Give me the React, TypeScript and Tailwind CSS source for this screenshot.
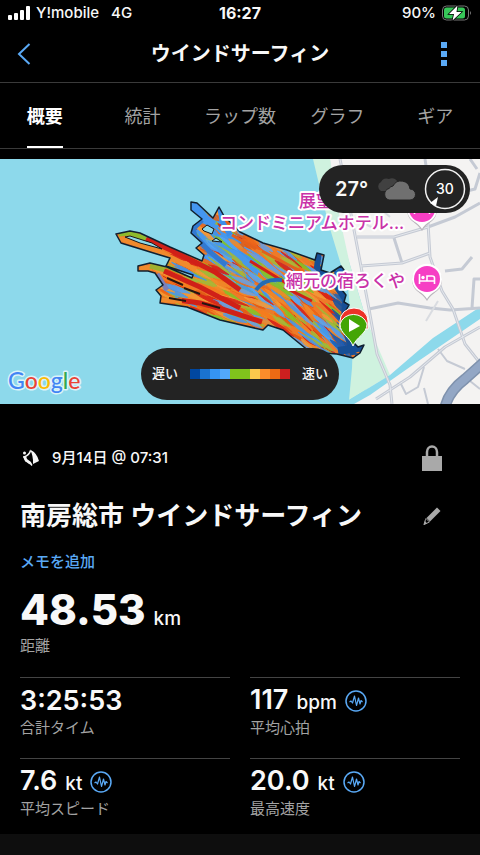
import type { ReactNode } from 'react';
import { useState } from 'react';

const tabs = ['概要', '統計', 'ラップ数', 'グラフ', 'ギア'];

const speedColors = [
  'bg-[#0047a0]',
  'bg-[#1a73d0]',
  'bg-[#3594f3]',
  'bg-[#52a8fa]',
  'bg-[#80c41c]',
  'bg-[#80c41c]',
  'bg-[#fcc84c]',
  'bg-[#fb8c2b]',
  'bg-[#ec6a14]',
  'bg-[#cc1f1f]',
];

const stats = [
  { value: '3:25:53', unit: '', label: '合計タイム', chart: false },
  { value: '117', unit: 'bpm', label: '平均心拍', chart: true },
  { value: '7.6', unit: 'kt', label: '平均スピード', chart: true },
  { value: '20.0', unit: 'kt', label: '最高速度', chart: true },
];

const trackOutline =
  'M116 75L130 72L140 74L170 88L202 102L204 96L196 89L202 84L191 74L193 67L202 60L191 51L191 43L197 44L213 59L219 48L224 57L240 73L263 84L287 91L315 101L317 94L324 96L321 111L330 114L341 107L344 111L338 122L342 131L346 136L344 143L349 146L345 153L350 160L352 182L358 188L364 186L360 194L353 199L337 195L310 193L283 171L268 166L263 171L220 161L187 148L160 144L161 137L156 131L163 126L155 114L148 112L138 112L138 107L150 104L167 108L192 119L193 116L166 107L170 99L160 96L121 84Z';

// Small seeded generator so the track looks the same on every render
function createRandom(seed: number) {
  let s = seed;
  return () => {
    s = (s * 16807) % 2147483647;
    return s / 2147483647;
  };
}

function buildStreaks() {
  const rand = createRandom(4853);
  const blue = ['#3f94ee', '#4fa0f5', '#4a98ea', '#5aa5f0', '#6a9fe0'];
  const warm = ['#f08a2c', '#f57d1f', '#d8241a', '#e2601c', '#ee6a1c', '#f29a3a'];
  const green = ['#86c22a', '#a3b83a'];
  const deep = ['#1d62b8', '#1a55a0'];
  const streaks: { d: string; color: string }[] = [];
  for (let i = 0; i < 900; i++) {
    const x = 135 + rand() * 222;
    const y = 45 + rand() * 150;
    const fromAxis = y - (60 + (x - 190) * 0.75);
    const nearStart = x > 205 && x < 255 && Math.abs(fromAxis - 8) < 20;
    const blueShare = nearStart ? 0.62 : x > 260 ? 0.34 : x < 200 ? 0.08 : 0.2;
    const r = rand();
    let set = warm;
    if (x > 328 && rand() < 0.6) set = deep;
    else if (r < blueShare) set = blue;
    else if (r > 0.83) set = green;
    const steep = x > 260 && y > 130 ? 10 : 0;
    const angle = ((fromAxis > 25 ? 18 : 27) + steep + rand() * 12) * (Math.PI / 180);
    const len = 12 + rand() * 24;
    const dx = Math.cos(angle) * len;
    const dy = Math.sin(angle) * len;
    // lens shape, pointed at both ends
    const w = 2 + rand() * 2.5;
    const nx = -Math.sin(angle) * w;
    const ny = Math.cos(angle) * w;
    const d = `M${x.toFixed(1)} ${y.toFixed(1)}q${(dx / 2 + nx).toFixed(1)} ${(dy / 2 + ny).toFixed(1)} ${dx.toFixed(1)} ${dy.toFixed(1)}q${(-dx / 2 - nx).toFixed(1)} ${(-dy / 2 - ny).toFixed(1)} ${(-dx).toFixed(1)} ${(-dy).toFixed(1)}`;
    streaks.push({ d, color: set[Math.floor(rand() * set.length)] });
  }
  return streaks;
}

const streaks = buildStreaks();

function HotelPin({ x, y }: { x: number; y: number }) {
  return (
    <g transform={`translate(${x} ${y})`}>
      <path d="M0 21C-3 16-6 14-10 11A15 15 0 1 1 10 11C6 14 3 16 0 21Z" fill="#b9b5bb" transform="translate(0 1)" />
      <path d="M0 20C-3 15-6 14-10 11A15 15 0 1 1 10 11C6 14 3 15 0 20Z" fill="#fff" />
      <circle r="13" fill="#f63fc4" />
      <path d="M-7.5-5V5M-7.500 2H7.500M7.500 5V-1Q7.500-3 5-3H0V2" fill="none" stroke="#fff" strokeWidth="1.600" />
      <circle cx="-4" cy="-1.500" r="1.700" fill="#fff" />
    </g>
  );
}

function TrackMap() {
  return (
    <svg viewBox="0 0 480 245" className="block w-full" role="img" aria-label="Google マップ">
      <defs>
        <clipPath id="track">
          <path d={trackOutline} />
        </clipPath>
      </defs>
      <rect width="480" height="245" fill="#8dd9eb" />
      <path d="M330 0L333 50L350 106L367 163L387 213L349 245H480V0Z" fill="#f4f3f2" />
      <path d="M313 0L328 63L348 129L353 180L352 209L349 241L390 216L367 163L350 106L340 60L330 0Z" fill="#cff2df" />
      <path d="M349 241L390 216L433 179L480 148V160L417 203L370 236L354 245H345Z" fill="#8dd9eb" />

      {/* roads */}
      <g fill="none" stroke="#c5cad4" strokeWidth="3" strokeLinejoin="round">
        <path d="M340 0L350 50L359 97L369 150L377 195L390 226L392 245" />
        <path d="M357 78L394 78L428 68M361 107L402 104L430 94" />
        <path d="M394 79L402 104M428 64L430 98L442 132L453 150L465 185L480 204" />
        <path d="M369 150L398 144L430 149L450 151L480 149M472 149L474 120H480" />
        <path d="M428 68L455 58L480 44M445 112L462 110L472 98" />
        <path d="M425 0L428 20M470 0L477 10M455 35L475 30L480 14" />
        <path d="M376 240L410 218L445 188L480 168" />
        <path d="M400 223L406 235L418 228L424 208M438 190L447 202L465 210M470 222L480 230M424 229L428 245" strokeWidth="2" />
        <path d="M438 142L426 162M352 58L375 70M375 45L390 58" stroke="#d9dce1" strokeWidth="2" />
      </g>
      <g fill="none" stroke="#e5e8ed" strokeWidth="1">
        <path d="M340 0L350 50L359 97L369 150L377 195L390 226L392 245" />
        <path d="M357 78L394 78L428 68M361 107L402 104L430 94M428 64L430 98L442 132L453 150L465 185L480 204" />
        <path d="M376 240L410 218L445 188L480 168" />
      </g>
      <path d="M445 248Q449 232 465 220L484 203" fill="none" stroke="#7f92ad" strokeWidth="11" />
      <path d="M445 248Q449 232 465 220L484 203" fill="none" stroke="#93a7c5" strokeWidth="8" />

      {/* recorded track, coloured by speed */}
      <g clipPath="url(#track)">
        <path d={trackOutline} fill="#ee7d2a" />
        <path d="M190 40L215 55L262 105L250 135L225 120L190 90Z" fill="#4a98ea" />
        {streaks.map((streak, i) => (
          <path key={i} d={streak.d} fill={streak.color} stroke={streak.color} strokeWidth="1" opacity="0.9" />
        ))}
        <g fill="none" strokeWidth="5">
          <path d="M119 79L160 93L196 111" stroke="#f08a2c" />
          <path d="M119 75L130 74L146 80" stroke="#8fbb2c" />
          <path d="M146 80L175 93L215 113L240 131" stroke="#d02018" />
          <path d="M140 109L152 109" stroke="#f08a2c" />
          <path d="M150 107L166 111" stroke="#a0b030" />
          <path d="M164 112L200 128L240 149" stroke="#d02018" />
          <path d="M157 115L167 131" stroke="#7c7fb8" />
          <path d="M178 141L200 144L225 151L262 163" stroke="#d02018" />
          <path d="M160 141L182 142" stroke="#f08a2c" />
          <path d="M262 92L300 112M232 76L256 90" stroke="#e2601c" strokeWidth="3" />
          <path d="M250 102L286 124M284 128L312 142" stroke="#d02018" strokeWidth="3" />
          <path d="M193 45L206 60L214 66" stroke="#4496f0" strokeWidth="8" />
          <path d="M202 61L193 70L195 77L209 92L226 106" stroke="#3279d0" />
          <path d="M220 50L222 62L230 76" stroke="#3d8de8" />
          <path d="M319 92L317 108L334 124L345 140L344 165L353 196" stroke="#174f96" strokeWidth="6" />
          <path d="M342 109L330 123" stroke="#1d62b8" />
          <path d="M338 192L352 190L362 188" stroke="#174f96" strokeWidth="8" />
        </g>
      </g>
      <path d={trackOutline} fill="none" stroke="#102030" strokeWidth="1.500" strokeLinejoin="round" />
      <path d="M125 78L130 77L152 84L162 90L140 84Z" fill="#8dd9eb" stroke="#181818" />
      <path d="M202 70L207 66L214 70L212 75L204 72Z" fill="#8dd9eb" stroke="#181818" />
      <path d="M212 82L222 83L216 79Z" fill="#8dd9eb" stroke="#181818" />
      <path d="M169 139L186 142M184 129L200 135M167 119L183 126M202 144L220 149" stroke="#241512" strokeWidth="2" />
      <path d="M256 131Q264 119 282 121" fill="none" stroke="#246bb4" strokeWidth="4" />

      <path d="M340 162A14 13 0 0 1 368 162V170H340Z" fill="#ed3127" stroke="#fff" strokeWidth="1" />
      <path d="M353 187C350 178 340 175 340 165A14 13 0 0 1 367 165C367 175 356 178 353 187Z" fill="#44a505" stroke="#fff" strokeWidth="1" />
      <path d="M349 160V173L360 167Z" fill="#fff" />

      <HotelPin x={422} y={50} />
      <HotelPin x={427} y={120} />
      <g
        className="font-[Inter,'Noto_Sans_CJK_JP',sans-serif] font-medium"
        fontSize="17"
        fill="#c932a8"
        stroke="#fff"
        strokeWidth="4"
        strokeLinejoin="round"
        paintOrder="stroke"
      >
        <text x="299" y="48">展望</text>
        <text x="220" y="70">コンドミニアムホテル...</text>
        <text x="286" y="128">網元の宿ろくや</text>
      </g>
      <g
        className="font-[Lato,sans-serif] font-medium"
        fontSize="23"
        stroke="#fff"
        strokeOpacity="0.7"
        strokeWidth="3"
        strokeLinejoin="round"
        paintOrder="stroke"
      >
        <text x="8" y="230">
          <tspan fill="#4285f4">G</tspan>
          <tspan fill="#ea4335">o</tspan>
          <tspan fill="#fbbc05">o</tspan>
          <tspan fill="#4285f4">g</tspan>
          <tspan fill="#34a853">l</tspan>
          <tspan fill="#ea4335">e</tspan>
        </text>
      </g>
    </svg>
  );
}

function StatusBar() {
  return (
    <div className="grid h-[26px] grid-cols-3 items-center px-2 text-[15px] font-medium">
      <div className="flex items-center gap-1.5">
        <svg width="22" height="14" viewBox="0 0 22 14" fill="#fff" aria-hidden="true">
          <rect y="9" width="4" height="5" rx="1" />
          <rect x="6" y="7" width="4" height="7" rx="1" />
          <rect x="12" y="4" width="4" height="10" rx="1" />
          <rect x="18" width="4" height="14" rx="1" />
        </svg>
        <span>Y!mobile</span>
        <span className="ml-1.5">4G</span>
      </div>
      <div className="text-center text-base font-bold">16:27</div>
      <div className="flex items-center justify-end gap-1.5">
        <span>90%</span>
        <svg width="30" height="16" viewBox="0 0 30 16" aria-hidden="true">
          <rect x="0.500" y="1" width="26" height="14" rx="4" fill="none" stroke="#777" />
          <rect x="2" y="2.500" width="21" height="11" rx="2.500" fill="#37c759" />
          <path d="M28 6q2 2 0 4z" fill="#777" />
          <path d="M15.500 0.500L7 9H12L10.500 15.500L19.500 7H14.500Z" fill="#fff" stroke="#000" strokeWidth="1.500" paintOrder="stroke" />
        </svg>
      </div>
    </div>
  );
}

function WeatherPill() {
  return (
    <div className="absolute top-1.5 right-2.5 flex h-12 w-[151px] items-center rounded-full bg-[#232323] pr-1 pl-4">
      <span className="text-xl font-semibold">27°</span>
      <svg className="ml-2" width="40" height="24" viewBox="0 0 40 24" aria-hidden="true">
        <path d="M5 14A5 5 0 0 1 5 5A6 6 0 0 1 13 2A6 6 0 0 1 22 7V14Z" fill="#414141" />
        <path d="M13 23A6 6 0 0 1 13 11.500A6 6 0 0 1 17 9A9 9 0 0 1 34 12A5.500 5.500 0 0 1 34 23Z" fill="#707070" stroke="#232323" strokeWidth="1" />
      </svg>
      <svg className="ml-auto" width="42" height="42" viewBox="0 0 42 42" aria-hidden="true">
        <circle cx="21" cy="21" r="19.500" fill="none" stroke="#f2f2f2" strokeWidth="1.500" />
        <path d="M6 35L14 29L12 38Z" fill="#fff" />
        <text x="21" y="26" textAnchor="middle" fontSize="14" fill="#fff" className="font-medium">30</text>
      </svg>
    </div>
  );
}

function SpeedLegend() {
  return (
    <div className="absolute bottom-1 left-1/2 flex h-[52px] w-[198px] -translate-x-1/2 items-center justify-between rounded-full bg-[#232323] px-[11px] text-[13px] font-medium">
      <span>遅い</span>
      <div className="flex">
        {speedColors.map((color, i) => (
          <span key={i} className={`h-2.5 w-2.5 ${color}`} />
        ))}
      </div>
      <span>速い</span>
    </div>
  );
}

function ChartIcon() {
  return (
    <svg width="22" height="22" viewBox="0 0 22 22" fill="none" stroke="#5aa9f5" aria-hidden="true">
      <circle cx="11" cy="11" r="10" strokeWidth="1.500" />
      <path d="M4.500 12L6 11L7.500 13L9.500 6L11.500 15.500L13.500 8L15 14L16 10.500L17.500 12" strokeWidth="1.200" strokeLinejoin="round" />
    </svg>
  );
}

function IconButton({ label, children }: { label: string; children: ReactNode }) {
  return (
    <button type="button" aria-label={label} className="flex w-8 items-center justify-center">
      {children}
    </button>
  );
}

export default function App() {
  const [activeTab, setActiveTab] = useState('概要');

  return (
    <div className="min-h-screen overflow-x-hidden bg-[#0e0e0e] font-[Inter,'Noto_Sans_CJK_JP',sans-serif] text-[#f8f8f8]" lang="ja">
      <div className="bg-black">
        <StatusBar />

        <header className="grid h-[57px] grid-cols-[1fr_auto_1fr] items-center border-b border-[#3a3a3a] px-2">
          <IconButton label="戻る">
            <svg width="14" height="22" viewBox="0 0 14 22" fill="none" stroke="#5aa9f5" strokeWidth="2" aria-hidden="true">
              <path d="M12.500 1L2 11L12.500 21" />
            </svg>
          </IconButton>
          <h1 className="text-xl font-bold">ウインドサーフィン</h1>
          <div className="mr-3 justify-self-end">
            <IconButton label="メニュー">
              <svg width="6" height="24" viewBox="0 0 6 24" fill="#5aa9f5" aria-hidden="true">
                <rect width="6" height="6" />
                <rect y="9" width="6" height="6" />
                <rect y="18" width="6" height="6" />
              </svg>
            </IconButton>
          </div>
        </header>

        <nav className="border-b border-[#3a3a3a]">
          <div className="-mx-1 grid h-[65px] grid-cols-5" role="tablist">
            {tabs.map((tab) => (
              <button
                key={tab}
                type="button"
                role="tab"
                aria-selected={activeTab === tab}
                onClick={() => setActiveTab(tab)}
                className={
                  activeTab === tab
                    ? 'justify-self-center border-b-2 border-white pt-1 text-lg font-bold text-white'
                    : 'justify-self-center border-b-2 border-transparent pt-1 text-lg text-[#a3a3a3]'
                }
              >
                {tab}
              </button>
            ))}
          </div>
        </nav>

        <section className="relative mt-2.5">
          <TrackMap />
          <WeatherPill />
          <SpeedLegend />
        </section>

        <main className="px-5 pt-10 pb-3.5">
          <div className="flex h-7 items-center">
            <svg width="20" height="20" viewBox="0 0 20 20" fill="#f4f4f4" aria-hidden="true">
              <path d="M10 1.500Q17 5 19 13L13 16Q13.500 8 10 1.500Z" />
              <circle cx="4.500" cy="5" r="1.500" />
              <path d="M10.500 2.500Q9.500 7 4 9L6 13L10 14.500L12 17.500" fill="none" stroke="#f4f4f4" strokeWidth="1.500" />
              <path d="M3 8.500L6 8L7 11L11 14L12 17L9 16L5 13Z" />
            </svg>
            <p className="ml-3 text-[15px] font-medium">9月14日 @ 07:31</p>
            <div className="mr-3 ml-auto">
              <IconButton label="プライバシー">
                <svg width="20" height="26" viewBox="0 0 20 26" aria-hidden="true">
                  <path d="M5 12V7a5 5.500 0 0 1 10 0v5" fill="none" stroke="#a9a9a9" strokeWidth="2.500" />
                  <rect y="11" width="20" height="15" fill="#a9a9a9" />
                </svg>
              </IconButton>
            </div>
          </div>

          <div className="mt-[26px] flex h-9 items-center justify-between">
            <h2 className="text-[26px] leading-9 font-bold">南房総市 ウインドサーフィン</h2>
            <div className="mr-3">
              <IconButton label="名前を編集">
                <svg width="18" height="18" viewBox="0 0 18 18" fill="#a9a9a9" aria-hidden="true">
                  <path d="M14 0.500L17.500 4L7 14.500L3.500 11Z" />
                  <path d="M3 11.500L6.500 15L1 17.500L2.500 12.500Z" fill="none" stroke="#a9a9a9" />
                  <path d="M0.500 18L2 14L4 16.500Z" />
                </svg>
              </IconButton>
            </div>
          </div>

          <button type="button" className="mt-4 block h-6 text-[15px] font-medium text-[#5aa9f5]">
            メモを追加
          </button>

          <p className="mt-4 flex h-10 items-baseline gap-2 leading-10">
            <span className="text-[42px] font-extrabold">48.53</span>
            <span className="text-[19px] font-medium">km</span>
          </p>
          <p className="mt-1 h-6 text-[15px] leading-6 text-[#a3a3a3]">距離</p>

          <dl className="mt-[19px] grid grid-cols-2 gap-x-5 gap-y-[19px]">
            {stats.map((stat) => (
              <div key={stat.label} className="flex h-[62px] flex-col-reverse justify-end border-t border-[#444444] pt-2">
                <dt className="text-[15px] leading-6 text-[#a3a3a3]">{stat.label}</dt>
                <dd className="flex h-[30px] items-center gap-2 leading-8">
                  <span className="flex items-baseline gap-2">
                    <span className="text-[27px] font-semibold">{stat.value}</span>
                    {stat.unit && <span className="text-[19px] font-medium">{stat.unit}</span>}
                  </span>
                  {stat.chart && <ChartIcon />}
                </dd>
              </div>
            ))}
          </dl>
        </main>
      </div>
    </div>
  );
}
